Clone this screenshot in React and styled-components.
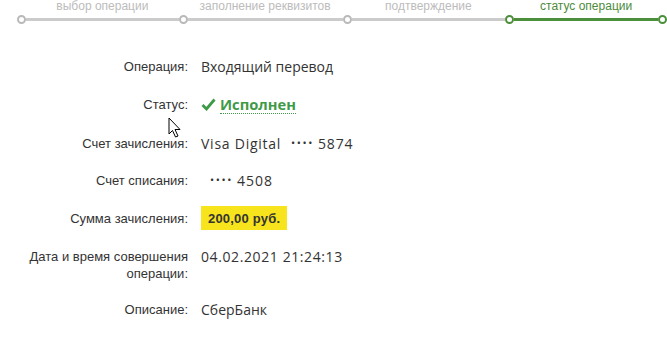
import React from "react";
import styled, { createGlobalStyle } from "styled-components";

const Global = createGlobalStyle`
  html, body { margin: 0; padding: 0; background: #fff; }
  body { width: 667px; height: 361px; overflow: hidden; position: relative; }
`;

const Page = styled.div`
  width: 667px;
  height: 361px;
  position: relative;
  overflow: hidden;
  font-family: "Liberation Sans", Arial, sans-serif;
`;

const StepsBar = styled.div`
  display: flex;
  align-items: flex-start;
  padding-left: 17px;
`;

const Step = styled.div`
  width: ${(p) => p.$w}px;
  display: flex;
  flex-direction: column;
`;

const StepLabel = styled.div`
  font-size: 12px;
  line-height: 13px;
  height: 13px;
  text-align: center;
  padding-left: 9px;
  color: ${(p) => (p.$active ? "#4b8b3b" : "#bcbcbc")};
  white-space: nowrap;
`;

const Track = styled.div`
  display: flex;
  align-items: center;
  margin-top: 1px;
  height: 10px;
`;

const Dot = styled.span`
  box-sizing: border-box;
  width: 9px;
  height: 9px;
  border-radius: 50%;
  background: #fff;
  border: 2px solid ${(p) => (p.$active ? "#4b8f3a" : "#b9b9b9")};
  flex: none;
`;

const Line = styled.span`
  flex: 1;
  height: 3px;
  background: ${(p) => (p.$active ? "#4b8f3a" : "#cbcbcb")};
`;

const EndDot = styled.div`
  margin-top: 14px;
  height: 10px;
  display: flex;
  align-items: center;
`;

const Details = styled.div`
  display: grid;
  grid-template-columns: 188px 1fr;
  column-gap: 13px;
  row-gap: 12.75px;
  margin-top: 30px;
`;

const Label = styled.div`
  text-align: right;
  font-size: 13px;
  line-height: 17px;
  padding: 4px 0 ${(p) => (p.$tight ? 2 : 4)}px;
  color: #333;
`;

const Value = styled.div`
  font-family: "Open Sans", "Noto Sans", sans-serif;
  font-size: 14px;
  line-height: 17px;
  padding: ${(p) => (p.$flush ? "0" : "4px 0")};
  color: #333;
  display: flex;
  align-items: flex-start;
  white-space: nowrap;
`;

const Wide = styled.span`
  letter-spacing: ${(p) => p.$ls || 0.7}px;
`;

const Dots = styled.span`
  font-size: 11px;
  letter-spacing: 1.6px;
  margin: 0 ${(p) => p.$r}px 0 ${(p) => p.$l}px;
  position: relative;
  top: -1px;
`;

const Status = styled.span`
  display: inline-flex;
  align-items: center;
  gap: 4px;
`;

const StatusText = styled.span`
  font-weight: 700;
  color: #3f9a48;
  border-bottom: 1px dotted #3f9a48;
  line-height: 17px;
  font-size: 14.7px;
`;

const Badge = styled.span`
  background: #f7e41c;
  font-family: "Liberation Sans", Arial, sans-serif;
  font-weight: 700;
  font-size: 13px;
  letter-spacing: 0.2px;
  line-height: 17px;
  padding: 3.5px 7px;
  color: #333;
`;

const Cursor = styled.svg`
  position: absolute;
  left: 168px;
  top: 117px;
`;

const steps = [
  { label: "выбор операции", w: 162 },
  { label: "заполнение реквизитов", w: 164 },
  { label: "подтверждение", w: 163 },
  { label: "статус операции", w: 153, active: true },
];

export default function App() {
  return (
    <Page>
      <Global />
      <StepsBar>
        {steps.map((s) => (
          <Step key={s.label} $w={s.w}>
            <StepLabel $active={s.active}>{s.label}</StepLabel>
            <Track>
              <Dot $active={s.active} />
              <Line $active={s.active} />
            </Track>
          </Step>
        ))}
        <EndDot>
          <Dot $active />
        </EndDot>
      </StepsBar>

      <Details>
        <Label>Операция:</Label>
        <Value>Входящий перевод</Value>

        <Label>Статус:</Label>
        <Value>
          <Status>
            <svg width="15" height="13" viewBox="0 0 15 13">
              <path d="M1.5 7 L5.5 11 L13.5 1.5" fill="none" stroke="#3f9a48" strokeWidth="2.8" strokeLinejoin="miter" />
            </svg>
            <StatusText>Исполнен</StatusText>
          </Status>
        </Value>

        <Label>Счет зачисления:</Label>
        <Value>
          <Wide $ls={0.75}>Visa Digital</Wide>
          <Dots $l={10} $r={4}>••••</Dots>
          <Wide $ls={0.8}>5874</Wide>
        </Value>

        <Label>Счет списания:</Label>
        <Value>
          <Dots $l={9} $r={4}>••••</Dots>
          <Wide $ls={1.0}>4508</Wide>
        </Value>

        <Label>Сумма зачисления:</Label>
        <Value $flush>
          <Badge>200,00 руб.</Badge>
        </Value>

        <Label $tight>
          Дата и время совершения
          <br />
          операции:
        </Label>
        <Value>
          <Wide $ls={0.6}>04.02.2021 21:24:13</Wide>
        </Value>

        <Label>Описание:</Label>
        <Value>СберБанк</Value>
      </Details>

      <Cursor width="14" height="22" viewBox="0 0 14 22">
        <path d="M1 1 L1 17 L4.5 13.5 L7.5 20 L10 19 L7 12.5 L12 12.5 Z" fill="#fff" stroke="#000" strokeWidth="1" strokeLinejoin="round" />
      </Cursor>
    </Page>
  );
}
